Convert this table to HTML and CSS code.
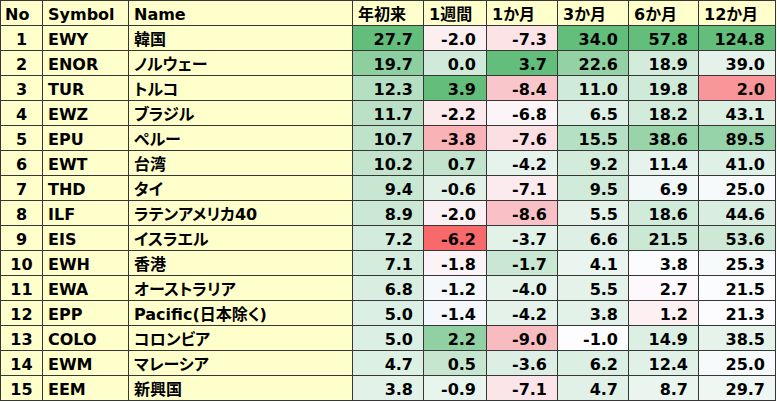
FILE: index.html
```html
<!DOCTYPE html>
<html lang="ja">
<head>
<meta charset="utf-8">
<title>ETF Performance</title>
<link rel="stylesheet" href="styles.css">
</head>
<body>
<table class="perf">
  <colgroup>
    <col class="c-no"><col class="c-sym"><col class="c-name"><col class="c-ytd"><col class="c-1w"><col class="c-1m"><col class="c-3m"><col class="c-6m"><col class="c-12m">
  </colgroup>
  <thead>
    <tr><th>No</th><th>Symbol</th><th>Name</th><th>年初来</th><th>1週間</th><th>1か月</th><th>3か月</th><th>6か月</th><th>12か月</th></tr>
  </thead>
  <tbody>
    <tr><td class="no">1</td><td class="sym">EWY</td><td class="name">韓国</td>
      <td class="num" style="background:#63BE7B">27.7</td><td class="num" style="background:#FBEFF2">-2.0</td><td class="num" style="background:#FBE3E6">-7.3</td><td class="num" style="background:#63BE7B">34.0</td><td class="num" style="background:#63BE7B">57.8</td><td class="num" style="background:#63BE7B">124.8</td></tr>
    <tr><td class="no">2</td><td class="sym">ENOR</td><td class="name">ノルウェー</td>
      <td class="num" style="background:#8DCF9F">19.7</td><td class="num" style="background:#CFEAD8">0.0</td><td class="num" style="background:#63BE7B">3.7</td><td class="num" style="background:#94D2A5">22.6</td><td class="num" style="background:#D2EBDB">18.9</td><td class="num" style="background:#E4F2EA">39.0</td></tr>
    <tr><td class="no">3</td><td class="sym">TUR</td><td class="name">トルコ</td>
      <td class="num" style="background:#B5DFC2">12.3</td><td class="num" style="background:#63BE7B">3.9</td><td class="num" style="background:#F9C7CB">-8.4</td><td class="num" style="background:#CFEAD9">11.0</td><td class="num" style="background:#CFEAD8">19.8</td><td class="num" style="background:#F8969A">2.0</td></tr>
    <tr><td class="no">4</td><td class="sym">EWZ</td><td class="name">ブラジル</td>
      <td class="num" style="background:#BAE1C6">11.7</td><td class="num" style="background:#FBE9EC">-2.2</td><td class="num" style="background:#FCF5F8">-6.8</td><td class="num" style="background:#DFF0E6">6.5</td><td class="num" style="background:#D3EBDB">18.2</td><td class="num" style="background:#DCEFE3">43.1</td></tr>
    <tr><td class="no">5</td><td class="sym">EPU</td><td class="name">ペルー</td>
      <td class="num" style="background:#BFE3CA">10.7</td><td class="num" style="background:#F9B3B6">-3.8</td><td class="num" style="background:#FBDFE2">-7.6</td><td class="num" style="background:#B6E0C3">15.5</td><td class="num" style="background:#99D4A9">38.6</td><td class="num" style="background:#97D3A8">89.5</td></tr>
    <tr><td class="no">6</td><td class="sym">EWT</td><td class="name">台湾</td>
      <td class="num" style="background:#C2E4CD">10.2</td><td class="num" style="background:#C2E4CD">0.7</td><td class="num" style="background:#E6F3EC">-4.2</td><td class="num" style="background:#D3EBDB">9.2</td><td class="num" style="background:#E6F3EC">11.4</td><td class="num" style="background:#DFF0E6">41.0</td></tr>
    <tr><td class="no">7</td><td class="sym">THD</td><td class="name">タイ</td>
      <td class="num" style="background:#C8E7D2">9.4</td><td class="num" style="background:#E1F1E7">-0.6</td><td class="num" style="background:#FCEBEE">-7.1</td><td class="num" style="background:#D1EBDA">9.5</td><td class="num" style="background:#F2F8F7">6.9</td><td class="num" style="background:#F7FAFB">25.0</td></tr>
    <tr><td class="no">8</td><td class="sym">ILF</td><td class="name">ラテンアメリカ40</td>
      <td class="num" style="background:#CAE8D4">8.9</td><td class="num" style="background:#FBF1F4">-2.0</td><td class="num" style="background:#F9C1C5">-8.6</td><td class="num" style="background:#E4F2EA">5.5</td><td class="num" style="background:#D1EBDA">18.6</td><td class="num" style="background:#D9EEE1">44.6</td></tr>
    <tr><td class="no">9</td><td class="sym">EIS</td><td class="name">イスラエル</td>
      <td class="num" style="background:#D2EBDA">7.2</td><td class="num" style="background:#F8696B">-6.2</td><td class="num" style="background:#E3F2E9">-3.7</td><td class="num" style="background:#DEF0E5">6.6</td><td class="num" style="background:#CAE8D3">21.5</td><td class="num" style="background:#CDE9D6">53.6</td></tr>
    <tr><td class="no">10</td><td class="sym">EWH</td><td class="name">香港</td>
      <td class="num" style="background:#D4ECDC">7.1</td><td class="num" style="background:#FBF3F6">-1.8</td><td class="num" style="background:#C9E7D3">-1.7</td><td class="num" style="background:#EAF5EF">4.1</td><td class="num" style="background:#FBFCFE">3.8</td><td class="num" style="background:#F6FAFA">25.3</td></tr>
    <tr><td class="no">11</td><td class="sym">EWA</td><td class="name">オーストラリア</td>
      <td class="num" style="background:#D9EEE1">6.8</td><td class="num" style="background:#F5F8FB">-1.2</td><td class="num" style="background:#E5F3EB">-4.0</td><td class="num" style="background:#E4F2EA">5.5</td><td class="num" style="background:#FCF8FB">2.7</td><td class="num" style="background:#FBFCFE">21.5</td></tr>
    <tr><td class="no">12</td><td class="sym">EPP</td><td class="name">Pacific(日本除く)</td>
      <td class="num" style="background:#DCEFE4">5.0</td><td class="num" style="background:#F4F7FC">-1.4</td><td class="num" style="background:#E4F2EA">-4.2</td><td class="num" style="background:#E3F2E9">3.8</td><td class="num" style="background:#FDF0F3">1.2</td><td class="num" style="background:#FCFCFF">21.3</td></tr>
    <tr><td class="no">13</td><td class="sym">COLO</td><td class="name">コロンビア</td>
      <td class="num" style="background:#DCEFE4">5.0</td><td class="num" style="background:#90D0A2">2.2</td><td class="num" style="background:#F8BBC0">-9.0</td><td class="num" style="background:#FDFDFF">-1.0</td><td class="num" style="background:#DCEFE3">14.9</td><td class="num" style="background:#E5F3EA">38.5</td></tr>
    <tr><td class="no">14</td><td class="sym">EWM</td><td class="name">マレーシア</td>
      <td class="num" style="background:#DDF0E4">4.7</td><td class="num" style="background:#C6E6D0">0.5</td><td class="num" style="background:#DDEFE4">-3.6</td><td class="num" style="background:#DCEFE3">6.2</td><td class="num" style="background:#E1F1E7">12.4</td><td class="num" style="background:#F7FAFB">25.0</td></tr>
    <tr><td class="no">15</td><td class="sym">EEM</td><td class="name">新興国</td>
      <td class="num" style="background:#E3F2E9">3.8</td><td class="num" style="background:#E8F4EE">-0.9</td><td class="num" style="background:#FBE5E9">-7.1</td><td class="num" style="background:#E2F1E8">4.7</td><td class="num" style="background:#EAF5EF">8.7</td><td class="num" style="background:#EEF7F2">29.7</td></tr>
  </tbody>
</table>
</body>
</html>
```

FILE: styles.css
```css
html, body {
  margin: 0;
  padding: 0;
  background: #ffffff;
}

.perf {
  border-collapse: collapse;
  table-layout: fixed;
  width: 776px;
  font-family: "DejaVu Sans", "Noto Sans CJK JP", sans-serif;
  font-weight: bold;
  font-size: 16px;
  color: #000;
  font-feature-settings: "palt";
}

.c-no { width: 42px; }
.c-sym { width: 86px; }
.c-name { width: 224px; }
.c-ytd { width: 71px; }
.c-1w { width: 63px; }
.c-1m { width: 71px; }
.c-3m { width: 71px; }
.c-6m { width: 70px; }
.c-12m { width: 77px; }

.perf th,
.perf td {
  border: 1px solid #363636;
  height: 25px;
  padding: 2px 0 0 0;
  box-sizing: border-box;
  line-height: 21px;
  white-space: nowrap;
  overflow: hidden;
  vertical-align: middle;
}

.perf th {
  background: #ffffcc;
  text-align: left;
  font-weight: bold;
  padding-left: 5px;
}

.perf th:first-child {
  padding-left: 4px;
}

.perf td.no {
  background: #ffffcc;
  text-align: center;
}

.perf td.sym,
.perf td.name {
  background: #ffffcc;
  text-align: left;
  padding-left: 5px;
}

.perf td.num {
  text-align: right;
  padding-right: 10px;
}
```
